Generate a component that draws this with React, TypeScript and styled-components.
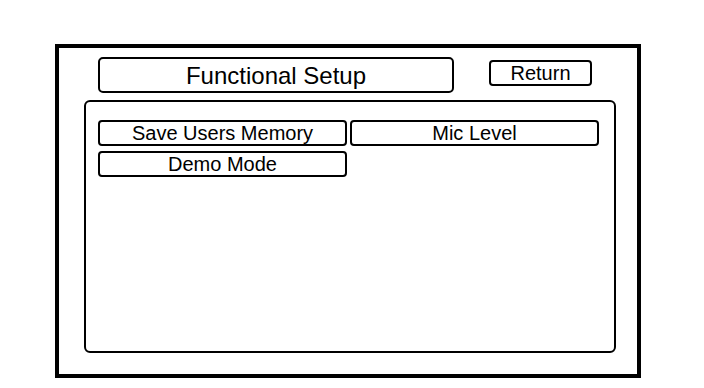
import React from "react";
import styled, { createGlobalStyle } from "styled-components";

const GlobalStyle = createGlobalStyle`
  html, body {
    margin: 0;
    padding: 0;
    background: #ffffff;
  }
  body {
    font-family: "Liberation Sans", Arial, sans-serif;
    color: #000000;
  }
`;

const Page = styled.div`
  width: 704px;
  height: 388px;
  padding: 44px 0 0 55px;
  box-sizing: border-box;
  background: #ffffff;
`;

const Frame = styled.div`
  width: 586px;
  height: 334px;
  box-sizing: border-box;
  border: 4px solid #000;
  padding: 9px 21px 21px 25px;
  display: flex;
  flex-direction: column;
  gap: 7px;
`;

const Header = styled.div`
  display: flex;
  align-items: center;
  gap: 35px;
  margin-left: 14px;
`;

const TitleBox = styled.div`
  width: 356px;
  height: 36px;
  box-sizing: border-box;
  border: 2px solid #000;
  border-radius: 5px;
  display: flex;
  align-items: center;
  justify-content: center;
  font-size: 24px;
  padding-top: 1px;
`;

const ReturnButton = styled.button`
  width: 103px;
  height: 26px;
  box-sizing: border-box;
  border: 2px solid #000;
  border-radius: 4px;
  background: #fff;
  color: #000;
  font-family: "Liberation Sans", Arial, sans-serif;
  font-size: 20px;
  padding: 0;
  margin-top: -4px;
  display: flex;
  align-items: center;
  justify-content: center;
`;

const Panel = styled.div`
  flex: 1;
  box-sizing: border-box;
  border: 2px solid #000;
  border-radius: 6px;
  padding: 18px 0 0 12px;
  display: grid;
  grid-template-columns: 249px 249px;
  grid-auto-rows: 26px;
  column-gap: 3px;
  row-gap: 5px;
  align-content: start;
`;

const MenuButton = styled.button`
  height: 26px;
  box-sizing: border-box;
  border: 2px solid #000;
  border-radius: 4px;
  background: #fff;
  color: #000;
  font-family: "Liberation Sans", Arial, sans-serif;
  font-size: 20px;
  padding: 0;
  display: flex;
  align-items: center;
  justify-content: center;
  line-height: 1;
`;

const items = ["Save Users Memory", "Mic Level", "Demo Mode"];

export default function App() {
  return (
    <>
      <GlobalStyle />
      <Page>
        <Frame>
          <Header>
            <TitleBox>Functional Setup</TitleBox>
            <ReturnButton>Return</ReturnButton>
          </Header>
          <Panel>
            {items.map((t) => (
              <MenuButton key={t}>{t}</MenuButton>
            ))}
          </Panel>
        </Frame>
      </Page>
    </>
  );
}
